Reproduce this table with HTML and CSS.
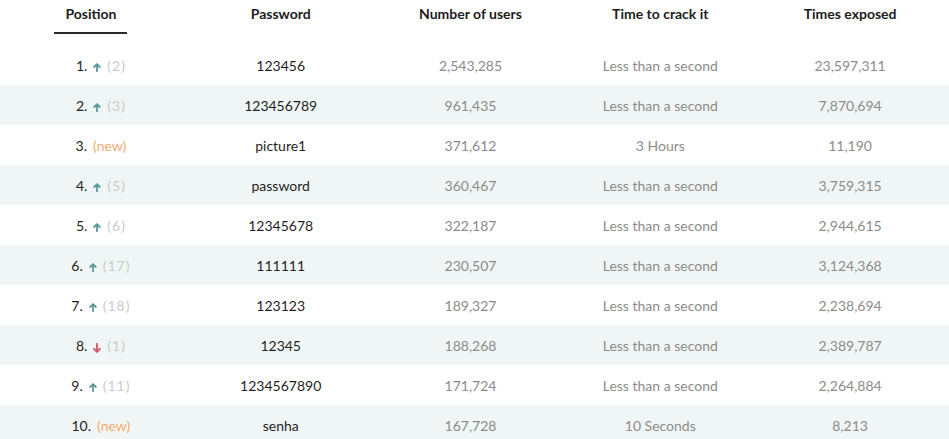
FILE: index.html
```html
<!DOCTYPE html>
<html lang="en">
<head>
<meta charset="utf-8">
<title>Most common passwords</title>
<link rel="stylesheet" href="styles.css">
</head>
<body>
<table class="pw-table">
  <thead>
    <tr>
      <th><span class="tab active">Position</span></th>
      <th><span class="tab">Password</span></th>
      <th><span class="tab">Number of users</span></th>
      <th><span class="tab">Time to crack it</span></th>
      <th><span class="tab">Times exposed</span></th>
    </tr>
  </thead>
  <tbody>
    <tr><td class="pos"><span class="num">1.</span><svg class="arr up" viewBox="0 0 8 9" width="8" height="9"><path d="M4 8.3V1.2M1.2 4L4 1.1L6.8 4"/></svg><span class="chg">(2)</span></td><td class="pw">123456</td><td>2,543,285</td><td>Less than a second</td><td>23,597,311</td></tr>
    <tr><td class="pos"><span class="num">2.</span><svg class="arr up" viewBox="0 0 8 9" width="8" height="9"><path d="M4 8.3V1.2M1.2 4L4 1.1L6.8 4"/></svg><span class="chg">(3)</span></td><td class="pw">123456789</td><td>961,435</td><td>Less than a second</td><td>7,870,694</td></tr>
    <tr><td class="pos"><span class="num">3.</span><span class="new">(new)</span></td><td class="pw">picture1</td><td>371,612</td><td>3 Hours</td><td>11,190</td></tr>
    <tr><td class="pos"><span class="num">4.</span><svg class="arr up" viewBox="0 0 8 9" width="8" height="9"><path d="M4 8.3V1.2M1.2 4L4 1.1L6.8 4"/></svg><span class="chg">(5)</span></td><td class="pw">password</td><td>360,467</td><td>Less than a second</td><td>3,759,315</td></tr>
    <tr><td class="pos"><span class="num">5.</span><svg class="arr up" viewBox="0 0 8 9" width="8" height="9"><path d="M4 8.3V1.2M1.2 4L4 1.1L6.8 4"/></svg><span class="chg">(6)</span></td><td class="pw">12345678</td><td>322,187</td><td>Less than a second</td><td>2,944,615</td></tr>
    <tr><td class="pos"><span class="num">6.</span><svg class="arr up" viewBox="0 0 8 9" width="8" height="9"><path d="M4 8.3V1.2M1.2 4L4 1.1L6.8 4"/></svg><span class="chg">(17)</span></td><td class="pw">111111</td><td>230,507</td><td>Less than a second</td><td>3,124,368</td></tr>
    <tr><td class="pos"><span class="num">7.</span><svg class="arr up" viewBox="0 0 8 9" width="8" height="9"><path d="M4 8.3V1.2M1.2 4L4 1.1L6.8 4"/></svg><span class="chg">(18)</span></td><td class="pw">123123</td><td>189,327</td><td>Less than a second</td><td>2,238,694</td></tr>
    <tr><td class="pos"><span class="num">8.</span><svg class="arr down" viewBox="0 0 8 10" width="8" height="10"><path d="M4 0.8V9M1 5.8L4 8.8L7 5.8"/></svg><span class="chg">(1)</span></td><td class="pw">12345</td><td>188,268</td><td>Less than a second</td><td>2,389,787</td></tr>
    <tr><td class="pos"><span class="num">9.</span><svg class="arr up" viewBox="0 0 8 9" width="8" height="9"><path d="M4 8.3V1.2M1.2 4L4 1.1L6.8 4"/></svg><span class="chg">(11)</span></td><td class="pw">1234567890</td><td>171,724</td><td>Less than a second</td><td>2,264,884</td></tr>
    <tr><td class="pos"><span class="num">10.</span><span class="new">(new)</span></td><td class="pw">senha</td><td>167,728</td><td>10 Seconds</td><td>8,213</td></tr>
  </tbody>
</table>
</body>
</html>
```

FILE: styles.css
```css
html, body {
  margin: 0;
  padding: 0;
  background: #ffffff;
}

body {
  font-family: Lato, "Open Sans", sans-serif;
  font-size: 14px;
  color: #222222;
}

.pw-table {
  width: 949px;
  border-collapse: collapse;
  table-layout: fixed;
}

.pw-table th {
  box-sizing: border-box;
  height: 45px;
  padding: 3px 8px 0 0;
  vertical-align: top;
  text-align: center;
  font-weight: 700;
  font-size: 14px;
  color: #1c1c1c;
}

.tab {
  display: inline-block;
  line-height: 22px;
  padding: 0 11px 7px;
  border-bottom: 2px solid transparent;
}

.tab.active {
  border-bottom-color: #2a2a2a;
}

.pw-table td {
  box-sizing: border-box;
  height: 40px;
  padding: 0 8px 0 0;
  text-align: center;
  vertical-align: middle;
  color: #8c8c8c;
  white-space: nowrap;
}

.pw-table tbody tr:nth-child(even) td {
  background: #f0f6f5;
}

.pw-table td.pw {
  color: #1f1f1f;
}

.pw-table td.pos {
  padding-left: 20px;
}

.num {
  display: inline-block;
  color: #1f1f1f;
  margin-right: 6px;
}

.arr {
  display: inline-block;
  fill: none;
  stroke-width: 1.8;
  stroke-linecap: round;
  stroke-linejoin: round;
  margin-right: 6px;
  vertical-align: -1px;
}

.arr.up {
  stroke: #5c9b96;
}

.arr.down {
  stroke: #d65366;
  vertical-align: -2px;
}

.chg {
  display: inline-block;
  color: #c8cccb;
  letter-spacing: 1px;
}

.new {
  display: inline-block;
  color: #f0ac74;
}
```
